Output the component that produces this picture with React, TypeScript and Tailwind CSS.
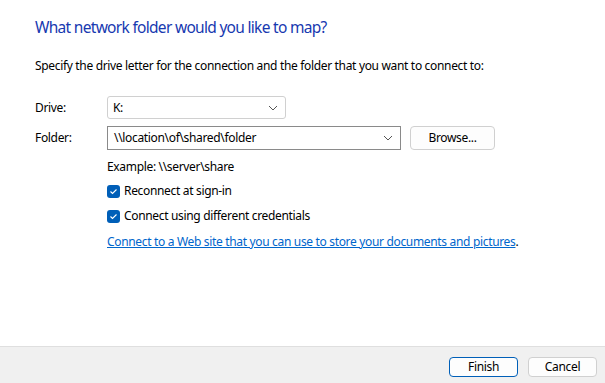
import React from "react";

function Chevron() {
  return (
    <svg width="10" height="6" viewBox="0 0 10 6" fill="none">
      <path d="M1 1l4 4 4-4" stroke="#555" strokeWidth="1" />
    </svg>
  );
}

function Check() {
  return (
    <span className="flex h-[13px] w-[13px] shrink-0 items-center justify-center rounded-[3px] bg-[#005fb8]">
      <svg width="9" height="7" viewBox="0 0 9 7" fill="none">
        <path d="M1.5 3.5l2 2 4-4" stroke="#fff" strokeWidth="1.1" />
      </svg>
    </span>
  );
}

export default function App() {
  return (
    <div
      className="flex h-[383px] w-[605px] flex-col bg-white text-[12px] tracking-[-0.33px] text-black"
      style={{ fontFamily: '"Segoe UI", "Noto Sans", sans-serif' }}
    >
      <div className="flex-1 pl-[35px] pt-[16px]">
        <div className="text-[15.5px] leading-[22px] tracking-[-0.7px] text-[#1739b0]">
          What network folder would you like to map?
        </div>
        <div className="mt-[20px] leading-[16px]">
          Specify the drive letter for the connection and the folder that you want to connect to:
        </div>
        <div className="mt-[22px] flex items-center">
          <div className="w-[72px]">Drive:</div>
          <div className="flex h-[23px] w-[179px] items-center justify-between rounded-[3px] border border-[#d0d0d0] bg-white pl-[5px] pr-[7px]">
            <span>K:</span>
            <Chevron />
          </div>
        </div>
        <div className="mt-[7px] flex items-center">
          <div className="w-[72px]">Folder:</div>
          <div className="flex h-[24px] w-[294px] items-center justify-between border border-[#8a8a8a] bg-white pl-[6px] pr-[7px]">
            <span>\\location\of\shared\folder</span>
            <Chevron />
          </div>
          <div className="ml-[9px] flex h-[24px] w-[85px] items-center justify-center rounded-[4px] border border-[#d0d0d0] bg-[#fdfdfd]">
            Browse...
          </div>
        </div>
        <div className="ml-[72px] mt-[9px] leading-[16px]">Example: \\server\share</div>
        <div className="ml-[72px] mt-[8px] flex items-center gap-[4px] leading-[16px]">
          <Check />
          <span>Reconnect at sign-in</span>
        </div>
        <div className="ml-[72px] mt-[9px] flex items-center gap-[4px] leading-[16px]">
          <Check />
          <span>Connect using different credentials</span>
        </div>
        <div className="ml-[72px] mt-[10px] leading-[16px]">
          <span className="text-[#0066cc] underline">
            Connect to a Web site that you can use to store your documents and pictures
          </span>
          .
        </div>
      </div>
      <div className="flex h-[37px] items-start justify-end gap-[10px] border-t border-[#dfdfdf] bg-[#f0f0f0] pr-[8px] pt-[10px]">
        <div className="flex h-[20px] w-[69px] items-center justify-center rounded-[4px] border border-[#005fb8] bg-[#fdfdfd]">
          Finish
        </div>
        <div className="flex h-[20px] w-[69px] items-center justify-center rounded-[4px] border border-[#d0d0d0] bg-[#fdfdfd]">
          Cancel
        </div>
      </div>
    </div>
  );
}
